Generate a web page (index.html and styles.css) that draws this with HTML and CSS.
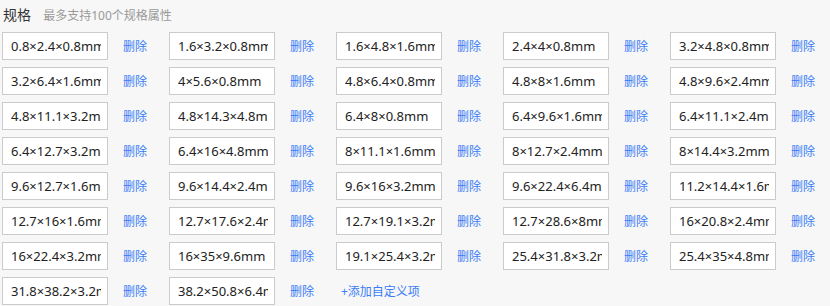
FILE: index.html
```html
<!DOCTYPE html>
<html lang="zh-CN">
<head>
<meta charset="UTF-8" />
<meta name="viewport" content="width=device-width, initial-scale=1" />
<title>规格</title>
<link rel="stylesheet" href="styles.css">
</head>
<body>

<div class="spec">
  <div class="spec-head">
    <span class="spec-title">规格</span>
    <span class="spec-tip">最多支持100个规格属性</span>
  </div>

  <div class="spec-list">
    <div class="spec-item"><input type="text" value="0.8×2.4×0.8mm" /><a href="#">删除</a></div>
    <div class="spec-item"><input type="text" value="1.6×3.2×0.8mm" /><a href="#">删除</a></div>
    <div class="spec-item"><input type="text" value="1.6×4.8×1.6mm" /><a href="#">删除</a></div>
    <div class="spec-item"><input type="text" value="2.4×4×0.8mm" /><a href="#">删除</a></div>
    <div class="spec-item"><input type="text" value="3.2×4.8×0.8mm" /><a href="#">删除</a></div>

    <div class="spec-item"><input type="text" value="3.2×6.4×1.6mm" /><a href="#">删除</a></div>
    <div class="spec-item"><input type="text" value="4×5.6×0.8mm" /><a href="#">删除</a></div>
    <div class="spec-item"><input type="text" value="4.8×6.4×0.8mm" /><a href="#">删除</a></div>
    <div class="spec-item"><input type="text" value="4.8×8×1.6mm" /><a href="#">删除</a></div>
    <div class="spec-item"><input type="text" value="4.8×9.6×2.4mm" /><a href="#">删除</a></div>

    <div class="spec-item"><input type="text" value="4.8×11.1×3.2mm" /><a href="#">删除</a></div>
    <div class="spec-item"><input type="text" value="4.8×14.3×4.8mm" /><a href="#">删除</a></div>
    <div class="spec-item"><input type="text" value="6.4×8×0.8mm" /><a href="#">删除</a></div>
    <div class="spec-item"><input type="text" value="6.4×9.6×1.6mm" /><a href="#">删除</a></div>
    <div class="spec-item"><input type="text" value="6.4×11.1×2.4mm" /><a href="#">删除</a></div>

    <div class="spec-item"><input type="text" value="6.4×12.7×3.2mm" /><a href="#">删除</a></div>
    <div class="spec-item"><input type="text" value="6.4×16×4.8mm" /><a href="#">删除</a></div>
    <div class="spec-item"><input type="text" value="8×11.1×1.6mm" /><a href="#">删除</a></div>
    <div class="spec-item"><input type="text" value="8×12.7×2.4mm" /><a href="#">删除</a></div>
    <div class="spec-item"><input type="text" value="8×14.4×3.2mm" /><a href="#">删除</a></div>

    <div class="spec-item"><input type="text" value="9.6×12.7×1.6mm" /><a href="#">删除</a></div>
    <div class="spec-item"><input type="text" value="9.6×14.4×2.4mm" /><a href="#">删除</a></div>
    <div class="spec-item"><input type="text" value="9.6×16×3.2mm" /><a href="#">删除</a></div>
    <div class="spec-item"><input type="text" value="9.6×22.4×6.4mm" /><a href="#">删除</a></div>
    <div class="spec-item"><input type="text" value="11.2×14.4×1.6mm" /><a href="#">删除</a></div>

    <div class="spec-item"><input type="text" value="12.7×16×1.6mm" /><a href="#">删除</a></div>
    <div class="spec-item"><input type="text" value="12.7×17.6×2.4mm" /><a href="#">删除</a></div>
    <div class="spec-item"><input type="text" value="12.7×19.1×3.2mm" /><a href="#">删除</a></div>
    <div class="spec-item"><input type="text" value="12.7×28.6×8mm" /><a href="#">删除</a></div>
    <div class="spec-item"><input type="text" value="16×20.8×2.4mm" /><a href="#">删除</a></div>

    <div class="spec-item"><input type="text" value="16×22.4×3.2mm" /><a href="#">删除</a></div>
    <div class="spec-item"><input type="text" value="16×35×9.6mm" /><a href="#">删除</a></div>
    <div class="spec-item"><input type="text" value="19.1×25.4×3.2mm" /><a href="#">删除</a></div>
    <div class="spec-item"><input type="text" value="25.4×31.8×3.2mm" /><a href="#">删除</a></div>
    <div class="spec-item"><input type="text" value="25.4×35×4.8mm" /><a href="#">删除</a></div>

    <div class="spec-item"><input type="text" value="31.8×38.2×3.2mm" /><a href="#">删除</a></div>
    <div class="spec-item"><input type="text" value="38.2×50.8×6.4mm" /><a href="#">删除</a></div>
    <div class="spec-item"><a href="#" class="spec-add">+添加自定义项</a></div>
  </div>
</div>

</body>
</html>
```

FILE: styles.css
```css
body { margin: 0; padding: 0; background: #f7f7f7; color: #333; font-family: "Noto Sans", "Noto Sans CJK SC", sans-serif; overflow: hidden; }
.spec { padding: 0 2px; }
.spec-head { height: 28px; line-height: 28px; margin-bottom: 4px; padding-left: 1px; }
.spec-title { font-size: 14px; color: #333; margin-right: 8px; }
.spec-tip { font-size: 12px; color: #999; }
.spec-list { display: grid; grid-template-columns: repeat(5, 167px); row-gap: 7px; }
.spec-item { height: 28px; display: flex; align-items: center; }
.spec-item input { box-sizing: border-box; width: 106px; height: 28px; margin: 0; padding: 0 6px 0 8px; border: 1px solid #cbcbcb; background: #fff; color: #222; font-family: inherit; font-size: 13px; outline: none; }
.spec-item a { margin-left: 15px; color: #3b7cf6; font-size: 12px; text-decoration: none; }
.spec-item a.spec-add { margin-left: 5px; }
```
